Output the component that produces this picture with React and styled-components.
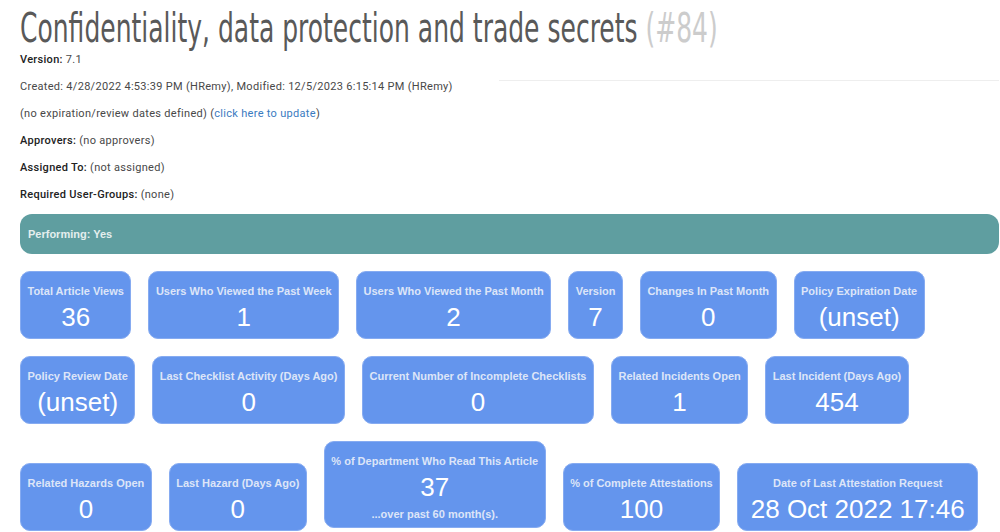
import React from 'react';
import styled, { createGlobalStyle } from 'styled-components';

const GlobalStyle = createGlobalStyle`
  html, body {
    margin: 0;
    padding: 0;
    background: #ffffff;
    overflow: hidden;
  }
  body {
    font-family: Roboto, "Liberation Sans", Arial, sans-serif;
  }
`;

const Page = styled.div`
  padding: 0 1px 0 20px;
`;

const Title = styled.h1`
  margin: 0;
  padding-top: 5px;
  height: 47px;
  font-family: "DejaVu Sans Condensed", "DejaVu Sans", sans-serif;
  font-weight: 400;
  font-size: 41px;
  line-height: 46px;
  color: #595959;
  white-space: nowrap;
`;

// no narrow face is installed, so the condensed face is squeezed to the reference width
const TitleText = styled.span`
  display: inline-block;
  transform: scaleX(0.678);
  transform-origin: left center;
`;

const TitleId = styled.span`
  color: #cccccc;
`;

const InfoLine = styled.div`
  display: flex;
  align-items: flex-start;
  font-size: 11px;
  line-height: 16px;
  letter-spacing: 0.3px;
  color: #484848;
  margin-bottom: 11px;
`;

const Label = styled.b`
  font-weight: 500;
  color: #222222;
`;

const Rule = styled.div`
  margin-left: auto;
  width: 500px;
  margin-top: 1px;
  border-top: 1px solid #eeeeee;
`;

const Link = styled.a`
  color: #3a7bbf;
  text-decoration: none;
`;

const StatusBar = styled.div`
  margin-top: 10px;
  height: 40px;
  box-sizing: border-box;
  background: #5f9ea0;
  border-radius: 12px;
  padding: 0 8px;
  display: flex;
  align-items: center;
  font-family: "Liberation Sans", Arial, sans-serif;
  font-size: 11px;
  font-weight: 700;
  color: #e4eeee;
`;

const Tiles = styled.div`
  margin-top: 17px;
  font-size: 0;
`;

const TileRow = styled.div`
  white-space: nowrap;
`;

const Tile = styled.div`
  display: inline-block;
  vertical-align: baseline;
  box-sizing: border-box;
  margin: 0 17px 17px 0;
  padding: 12px 6.5px 6px;
  background: #6495ed;
  border: 1px solid #86abf1;
  border-radius: 10px;
  text-align: center;
  font-family: "Liberation Sans", Arial, sans-serif;
`;

const TileLabel = styled.div`
  font-size: 11px;
  line-height: 14px;
  font-weight: 700;
  color: #dde5f8;
`;

const TileValue = styled.div`
  margin-top: 5px;
  padding: 0 6px;
  font-size: 26px;
  line-height: 29px;
  color: #ffffff;
`;

const TileNote = styled.div`
  margin-top: 5px;
  font-size: 11px;
  line-height: 14px;
  font-weight: 700;
  color: #dde5f8;
`;

const rows = [
  [
    ['Total Article Views', '36'],
    ['Users Who Viewed the Past Week', '1'],
    ['Users Who Viewed the Past Month', '2'],
    ['Version', '7'],
    ['Changes In Past Month', '0'],
    ['Policy Expiration Date', '(unset)'],
  ],
  [
    ['Policy Review Date', '(unset)'],
    ['Last Checklist Activity (Days Ago)', '0'],
    ['Current Number of Incomplete Checklists', '0'],
    ['Related Incidents Open', '1'],
    ['Last Incident (Days Ago)', '454'],
  ],
  [
    ['Related Hazards Open', '0'],
    ['Last Hazard (Days Ago)', '0'],
    ['% of Department Who Read This Article', '37', '...over past 60 month(s).'],
    ['% of Complete Attestations', '100'],
    ['Date of Last Attestation Request', '28 Oct 2022 17:46'],
  ],
];

const App = () => (
  <Page>
    <GlobalStyle />
    <Title>
      <TitleText>
        Confidentiality, data protection and trade secrets <TitleId>(#84)</TitleId>
      </TitleText>
    </Title>
    <InfoLine>
      <span><Label>Version:</Label> 7.1</span>
    </InfoLine>
    <InfoLine>
      <span>Created: 4/28/2022 4:53:39 PM (HRemy), Modified: 12/5/2023 6:15:14 PM (HRemy)</span>
      <Rule />
    </InfoLine>
    <InfoLine>
      <span>
        (no expiration/review dates defined) (<Link href="#">click here to update</Link>)
      </span>
    </InfoLine>
    <InfoLine>
      <span><Label>Approvers:</Label> (no approvers)</span>
    </InfoLine>
    <InfoLine>
      <span><Label>Assigned To:</Label> (not assigned)</span>
    </InfoLine>
    <InfoLine>
      <span><Label>Required User-Groups:</Label> (none)</span>
    </InfoLine>
    <StatusBar>Performing: Yes</StatusBar>
    <Tiles>
      {rows.map((row, i) => (
        <TileRow key={i}>
          {row.map(([label, value, note]) => (
            <Tile key={label}>
              <TileLabel>{label}</TileLabel>
              <TileValue>{value}</TileValue>
              {note && <TileNote>{note}</TileNote>}
            </Tile>
          ))}
        </TileRow>
      ))}
    </Tiles>
  </Page>
);

export default App;
